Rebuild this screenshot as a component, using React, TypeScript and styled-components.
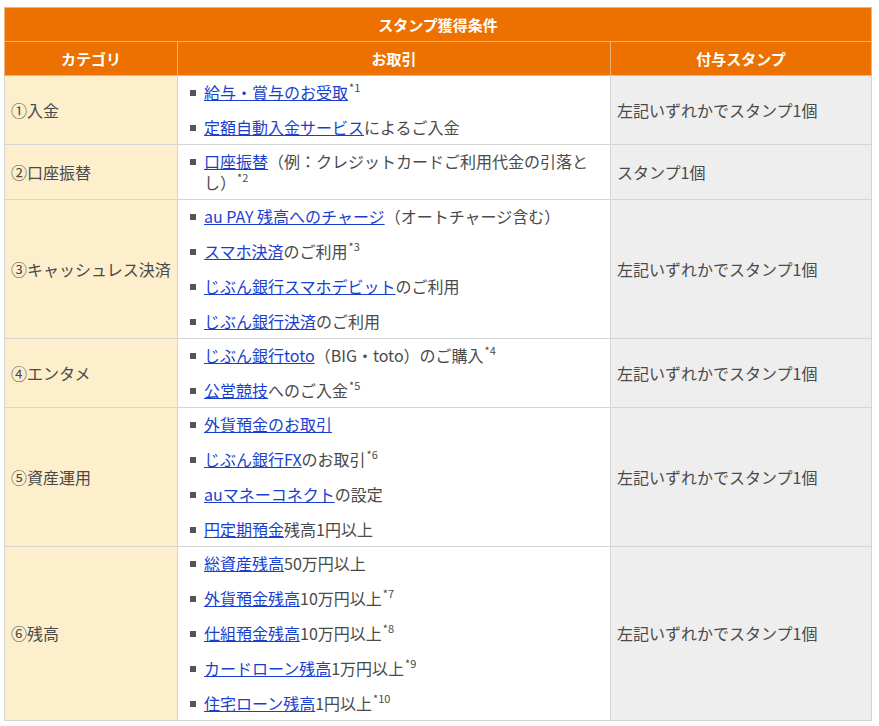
import React from "react";
import styled, { createGlobalStyle } from "styled-components";

const Global = createGlobalStyle`
  body {
    margin: 0;
    padding: 7px 8px 0 4px;
    background: #fff;
    font-family: "Noto Sans CJK JP", "Noto Sans", sans-serif;
    color: #4a4a4a;
  }
`;

const Table = styled.table`
  width: 867px;
  border-collapse: collapse;
  font-size: 16px;
  table-layout: fixed;
`;

const Th = styled.th`
  background: #ec7100;
  color: #fff;
  font-weight: 700;
  font-size: 15px;
  height: 33px;
  padding: 0;
  border: 1px solid #f2b27a;
  line-height: 20px;
`;

const Cell = styled.td<{ $tone: "cat" | "main" | "stamp" }>`
  border: 1px solid #d4d4d4;
  vertical-align: middle;
  padding: ${({ $tone }) => ($tone === "main" ? "6px 10px 6px 10px" : "0 6px")};
  background: ${({ $tone }) =>
    $tone === "cat" ? "#fdeecc" : $tone === "stamp" ? "#eeeeee" : "#fff"};
  line-height: 21px;
`;

const List = styled.ul`
  list-style: none;
  margin: 0;
  padding: 0;
`;

const Item = styled.li`
  position: relative;
  padding-left: 16px;
  line-height: 21px;
  height: auto;
  & + & {
    margin-top: 14px;
  }
  &::before {
    content: "";
    position: absolute;
    left: 2px;
    top: 8px;
    width: 6px;
    height: 6px;
    background: #555;
  }
`;

const A = styled.a`
  color: #1a3fd0;
  text-decoration: underline;
`;

const Sup = styled.span`
  font-size: 11px;
  line-height: 0;
  position: relative;
  top: -7px;
  margin-left: 1px;
`;

type Row = { cat: string; items: React.ReactNode[]; stamp: string };

const ANY = "左記いずれかでスタンプ1個";

const rows: Row[] = [
  {
    cat: "①入金",
    items: [
      <><A href="#">給与・賞与のお受取</A><Sup>*1</Sup></>,
      <><A href="#">定額自動入金サービス</A>によるご入金</>,
    ],
    stamp: ANY,
  },
  {
    cat: "②口座振替",
    items: [
      <><A href="#">口座振替</A>（例：クレジットカードご利用代金の引落とし）<Sup>*2</Sup></>,
    ],
    stamp: "スタンプ1個",
  },
  {
    cat: "③キャッシュレス決済",
    items: [
      <><A href="#">au PAY 残高へのチャージ</A>（オートチャージ含む）</>,
      <><A href="#">スマホ決済</A>のご利用<Sup>*3</Sup></>,
      <><A href="#">じぶん銀行スマホデビット</A>のご利用</>,
      <><A href="#">じぶん銀行決済</A>のご利用</>,
    ],
    stamp: ANY,
  },
  {
    cat: "④エンタメ",
    items: [
      <><A href="#">じぶん銀行toto</A>（BIG・toto）のご購入<Sup>*4</Sup></>,
      <><A href="#">公営競技</A>へのご入金<Sup>*5</Sup></>,
    ],
    stamp: ANY,
  },
  {
    cat: "⑤資産運用",
    items: [
      <><A href="#">外貨預金のお取引</A></>,
      <><A href="#">じぶん銀行FX</A>のお取引<Sup>*6</Sup></>,
      <><A href="#">auマネーコネクト</A>の設定</>,
      <><A href="#">円定期預金</A>残高1円以上</>,
    ],
    stamp: ANY,
  },
  {
    cat: "⑥残高",
    items: [
      <><A href="#">総資産残高</A>50万円以上</>,
      <><A href="#">外貨預金残高</A>10万円以上<Sup>*7</Sup></>,
      <><A href="#">仕組預金残高</A>10万円以上<Sup>*8</Sup></>,
      <><A href="#">カードローン残高</A>1万円以上<Sup>*9</Sup></>,
      <><A href="#">住宅ローン残高</A>1円以上<Sup>*10</Sup></>,
    ],
    stamp: ANY,
  },
];

export default function App() {
  return (
    <>
      <Global />
      <Table>
        <colgroup>
          <col style={{ width: 173 }} />
          <col style={{ width: 433 }} />
          <col style={{ width: 261 }} />
        </colgroup>
        <thead>
          <tr>
            <Th colSpan={3}>スタンプ獲得条件</Th>
          </tr>
          <tr>
            <Th>カテゴリ</Th>
            <Th>お取引</Th>
            <Th>付与スタンプ</Th>
          </tr>
        </thead>
        <tbody>
          {rows.map((r) => (
            <tr key={r.cat}>
              <Cell $tone="cat">{r.cat}</Cell>
              <Cell $tone="main">
                <List>
                  {r.items.map((it, i) => (
                    <Item key={i}>{it}</Item>
                  ))}
                </List>
              </Cell>
              <Cell $tone="stamp">{r.stamp}</Cell>
            </tr>
          ))}
        </tbody>
      </Table>
    </>
  );
}
